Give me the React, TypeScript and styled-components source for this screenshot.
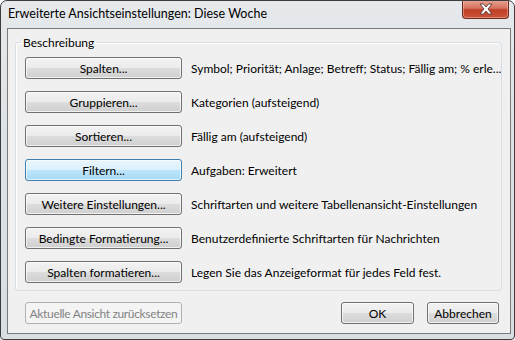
import React from "react";
import styled, { createGlobalStyle } from "styled-components";

const Global = createGlobalStyle`
  html, body { margin: 0; padding: 0; background: #ffffff; }
  body { font-family: Lato, "Open Sans", sans-serif; }
`;

const Window = styled.div`
  box-sizing: border-box;
  width: 515px;
  height: 340px;
  border: 1px solid #3c3c3c;
  border-radius: 7px 7px 4px 4px;
  background: linear-gradient(180deg, #e6e9ec 0%, #dde2e6 40%, #d9dee3 100%);
  display: flex;
  flex-direction: column;
  padding: 0 3px 5px 6px;
  overflow: hidden;
`;

const TitleBar = styled.div`
  height: 27px;
  display: flex;
  align-items: flex-start;
  justify-content: space-between;
`;

const Title = styled.div`
  font-size: 12.5px;
  color: #000;
  padding: 5px 0 0 1px;
`;

const CloseButton = styled.div`
  width: 45px;
  height: 18px;
  margin-top: -1px;
  margin-right: 2px;
  border: 1px solid #6b2a21;
  border-top: none;
  border-radius: 0 0 4px 4px;
  background: linear-gradient(180deg, #e8a597 0%, #d6735f 45%, #c23e26 55%, #c9553c 100%);
  display: flex;
  align-items: center;
  justify-content: center;
  box-shadow: inset 0 0 0 1px rgba(255, 200, 190, 0.45);
`;

const Client = styled.div`
  flex: 1;
  border: 1px solid #7a7a7a;
  background: #f0f0f0;
  display: flex;
  flex-direction: column;
  padding: 6px 10px 9px 7px;
`;

const Group = styled.fieldset`
  margin: 0;
  padding: 7px 0 7px 9px;
  border: 1px solid #d5dfe5;
  border-radius: 3px;
  box-shadow: inset 1px 1px 0 #ffffff;
  display: flex;
  flex-direction: column;
  gap: 12px;
`;

const Legend = styled.legend`
  font-size: 12px;
  color: #000;
  padding: 0 2px;
  margin-left: -4px;
`;

const Row = styled.div`
  display: flex;
  align-items: center;
  gap: 9px;
`;

const Button = styled.div<{ $focused?: boolean; $disabled?: boolean; $w?: number }>`
  box-sizing: border-box;
  width: ${(p) => p.$w ?? 157}px;
  height: 22px;
  flex-shrink: 0;
  border-radius: 3px;
  font-size: 12px;
  white-space: nowrap;
  letter-spacing: ${(p) => (p.$disabled ? "-0.35px" : "0")};
  display: flex;
  align-items: center;
  justify-content: center;
  border: 1px solid ${(p) => (p.$focused ? "#3c7fb1" : p.$disabled ? "#adb2b5" : "#707070")};
  color: ${(p) => (p.$disabled ? "#838383" : "#000")};
  background: ${(p) =>
    p.$focused
      ? "linear-gradient(180deg, #eaf6fd 0%, #d9f0fc 50%, #bee6fd 50%, #a7d9f5 100%)"
      : p.$disabled
      ? "#f4f4f4"
      : "linear-gradient(180deg, #f2f2f2 0%, #ebebeb 50%, #dddddd 50%, #cfcfcf 100%)"};
  box-shadow: ${(p) => (p.$disabled ? "none" : "inset 0 0 0 1px rgba(255,255,255,0.7)")};
`;

const Desc = styled.div`
  font-size: 12px;
  color: #000;
  white-space: nowrap;
`;

const Footer = styled.div`
  margin-top: auto;
  display: flex;
  align-items: center;
  padding-left: 10px;
`;

const FooterRight = styled.div`
  margin-left: auto;
  display: flex;
  gap: 13px;
  margin-right: 1px;
`;

const rows: [string, string, boolean?][] = [
  ["Spalten...", "Symbol; Priorität; Anlage; Betreff; Status; Fällig am; % erle..."],
  ["Gruppieren...", "Kategorien (aufsteigend)"],
  ["Sortieren...", "Fällig am (aufsteigend)"],
  ["Filtern...", "Aufgaben: Erweitert", true],
  ["Weitere Einstellungen...", "Schriftarten und weitere Tabellenansicht-Einstellungen"],
  ["Bedingte Formatierung...", "Benutzerdefinierte Schriftarten für Nachrichten"],
  ["Spalten formatieren...", "Legen Sie das Anzeigeformat für jedes Feld fest."],
];

export default function App() {
  return (
    <>
      <Global />
      <Window>
        <TitleBar>
          <Title>Erweiterte Ansichtseinstellungen: Diese Woche</Title>
          <CloseButton>
            <svg width="16" height="12" viewBox="0 0 16 12">
              <path
                d="M2 1 L5.5 1 L8 4 L10.5 1 L14 1 L10 6 L14 11 L10.5 11 L8 8 L5.5 11 L2 11 L6 6 Z"
                fill="#ffffff"
                stroke="#5a3a36"
                strokeWidth="0.9"
                strokeLinejoin="round"
              />
            </svg>
          </CloseButton>
        </TitleBar>
        <Client>
          <Group>
            <Legend>Beschreibung</Legend>
            {rows.map(([label, desc, focused]) => (
              <Row key={label}>
                <Button $focused={focused}>{label}</Button>
                <Desc>{desc}</Desc>
              </Row>
            ))}
          </Group>
          <Footer>
            <Button $disabled>Aktuelle Ansicht zurücksetzen</Button>
            <FooterRight>
              <Button $w={73}>OK</Button>
              <Button $w={72}>Abbrechen</Button>
            </FooterRight>
          </Footer>
        </Client>
      </Window>
    </>
  );
}
